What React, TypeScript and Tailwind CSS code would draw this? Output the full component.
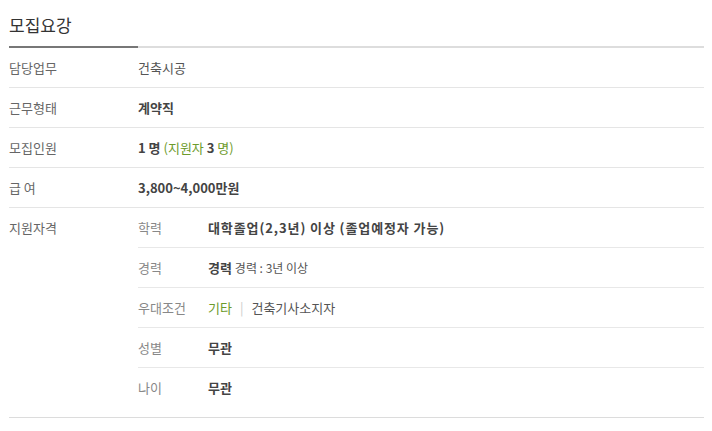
const rows = [
  { label: '담당업무', value: <span className="text-[#555]">건축시공</span> },
  { label: '근무형태', value: <span className="font-bold text-[#444]">계약직</span> },
  {
    label: '모집인원',
    value: (
      <span className="font-bold text-[#444]">
        1 명 <span className="font-normal text-[#6d9b2c]">(지원자 </span>3<span className="font-normal text-[#6d9b2c]"> 명)</span>
      </span>
    ),
  },
  { label: '급 여', value: <span className="font-bold text-[#444]">3,800~4,000만원</span> },
];

const quals = [
  {
    label: '학력',
    value: <span className="font-bold tracking-[0.9px] text-[#444]">대학졸업(2,3년) 이상 (졸업예정자 가능)</span>,
  },
  {
    label: '경력',
    value: (
      <span className="text-[#444]">
        <span className="font-bold">경력</span> <span className="text-[12px] text-[#555]">경력 : 3년 이상</span>
      </span>
    ),
  },
  {
    label: '우대조건',
    value: (
      <span className="flex items-center">
        <span className="text-[#6d9b2c]">기타</span>
        <span className="mx-[8px] text-[#ccc]">|</span>
        <span className="text-[#555]">건축기사소지자</span>
      </span>
    ),
  },
  { label: '성별', value: <span className="font-bold text-[#444]">무관</span> },
  { label: '나이', value: <span className="font-bold text-[#444]">무관</span> },
];

export default function App() {
  return (
    <div
      className="min-h-[431px] bg-white pl-[9px] text-[13px]"
      style={{ fontFamily: '"Noto Sans CJK KR", "Noto Sans", sans-serif' }}
    >
      <div className="w-[695px]">
        <div className="flex h-[46px] items-center pt-[4px] text-[17px] text-[#333]">모집요강</div>
        <div className="flex h-[2px]">
          <div className="w-[129px] bg-[#777]" />
          <div className="flex-1 bg-[#ddd]" />
        </div>

        {rows.map((row) => (
          <div key={row.label} className="flex h-[40px] items-center border-b border-[#e5e5e5]">
            <div className="w-[129px] text-[#666]">{row.label}</div>
            <div>{row.value}</div>
          </div>
        ))}

        <div className="flex border-b border-[#dcdcdc] pb-[9px]">
          <div className="flex h-[40px] w-[129px] items-center text-[#666]">지원자격</div>
          <div className="flex-1">
            {quals.map((q, i) => (
              <div
                key={q.label}
                className={
                  i < quals.length - 1
                    ? 'flex h-[40px] items-center border-b border-[#e8e8e8]'
                    : 'flex h-[40px] items-center'
                }
              >
                <div className="w-[70px] text-[#888]">{q.label}</div>
                <div>{q.value}</div>
              </div>
            ))}
          </div>
        </div>
      </div>
    </div>
  );
}
